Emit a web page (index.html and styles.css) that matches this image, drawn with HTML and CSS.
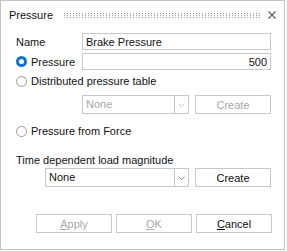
FILE: index.html
```html
<!DOCTYPE html>
<html lang="en">
<head>
    <meta charset="UTF-8">
    <title>Pressure</title>
    <link rel="stylesheet" href="styles.css">
</head>
<body>
    <div class="dialog">
        <div class="title-bar">
            <span class="title">Pressure</span>
            <span class="grip"></span>
            <svg class="close" width="8" height="8" viewBox="0 0 8 8">
                <path d="M0.5 0.5 L7.5 7.5 M7.5 0.5 L0.5 7.5" stroke="#555" stroke-width="1.1" fill="none"/>
            </svg>
        </div>

        <div class="form">
            <div class="row">
                <span class="label">Name</span>
                <input class="field" type="text" value="Brake Pressure">
            </div>
            <div class="row">
                <span class="radio"><span class="dot checked"></span>Pressure</span>
                <input class="field number" type="text" value="500">
            </div>

            <div class="radio line"><span class="dot"></span>Distributed pressure table</div>
            <div class="row sub">
                <div class="select short disabled">
                    <span class="value">None</span>
                    <span class="arrow"><svg width="7" height="4" viewBox="0 0 7 4"><path d="M0.5 0.5 L3.5 3.5 L6.5 0.5" stroke="#c4c4c4" fill="none"/></svg></span>
                </div>
                <button class="btn" disabled>Create</button>
            </div>

            <div class="radio line force"><span class="dot"></span>Pressure from Force</div>

            <div class="section">Time dependent load magnitude</div>
            <div class="row time">
                <div class="select wide">
                    <span class="value">None</span>
                    <span class="arrow"><svg width="7" height="4" viewBox="0 0 7 4"><path d="M0.5 0.5 L3.5 3.5 L6.5 0.5" stroke="#999" fill="none"/></svg></span>
                </div>
                <button class="btn">Create</button>
            </div>
        </div>

        <div class="actions">
            <button class="btn" disabled><u>A</u>pply</button>
            <button class="btn" disabled><u>O</u>K</button>
            <button class="btn"><u>C</u>ancel</button>
        </div>
    </div>
</body>
</html>
```

FILE: styles.css
```css
* {
    box-sizing: border-box;
    margin: 0;
    padding: 0;
}

body {
    font-family: "Liberation Sans", Arial, sans-serif;
    font-size: 11px;
    color: #111;
    background: #ffffff;
}

.dialog {
    width: 285px;
    height: 250px;
    border: 1px solid #c4c4c4;
    background: #ffffff;
}

.title-bar {
    height: 27px;
    display: flex;
    align-items: center;
    padding: 0 8px 0 8px;
}

.title {
    font-size: 11px;
    color: #111;
}

.grip {
    flex: 1;
    height: 6px;
    margin: 0 7px 0 9px;
    background:
        linear-gradient(90deg, #fff 2px, transparent 2px) 0 0 / 3px 2px,
        linear-gradient(#fff 1px, #9a9a9a 1px) 0 0 / 3px 2px;
}

.close {
    display: block;
}

.form {
    padding: 5px 12px 0 15px;
}

.row {
    display: flex;
    align-items: center;
    height: 17px;
    margin-bottom: 3px;
}

.label,
.radio {
    width: 66px;
    flex: none;
}

.radio {
    display: flex;
    align-items: center;
}

.radio.line {
    width: auto;
    height: 16px;
    margin-top: 3px;
}

.dot {
    width: 11px;
    height: 11px;
    border: 1px solid #9a9a9a;
    border-radius: 50%;
    margin-right: 4px;
    flex: none;
}

.dot.checked {
    border: 3px solid #0a74d8;
}

.field {
    width: 189px;
    height: 17px;
    border: 1px solid #c8c8c8;
    font-family: inherit;
    font-size: 11px;
    color: #111;
    padding: 0 3px;
    outline: none;
}

.field.number {
    text-align: right;
}

.row.sub {
    height: 19px;
    margin-top: 6px;
    padding-left: 66px;
    margin-bottom: 0;
}

.radio.line.force {
    margin-top: 9px;
}

.section {
    margin-top: 13px;
    height: 16px;
    line-height: 16px;
}

.row.time {
    height: 19px;
    margin-top: 0;
    padding-left: 29px;
}

.select {
    height: 19px;
    display: flex;
    border: 1px solid #c8c8c8;
    margin-right: 6px;
}

.select.short {
    width: 107px;
}

.select.wide {
    width: 144px;
}

.select .value {
    flex: 1;
    padding-left: 3px;
    line-height: 17px;
}

.select.disabled .value {
    color: #a8a8a8;
}

.select .arrow {
    width: 14px;
    border-left: 1px solid #c8c8c8;
    display: flex;
    align-items: center;
    justify-content: center;
}

.btn {
    width: 76px;
    height: 19px;
    border: 1px solid #c8c8c8;
    background: #ffffff;
    font-family: inherit;
    font-size: 11px;
    color: #111;
}

.btn:disabled {
    color: #a8a8a8;
}

.actions {
    display: flex;
    justify-content: flex-end;
    gap: 4px;
    padding-right: 12px;
    margin-top: 27px;
}
```
